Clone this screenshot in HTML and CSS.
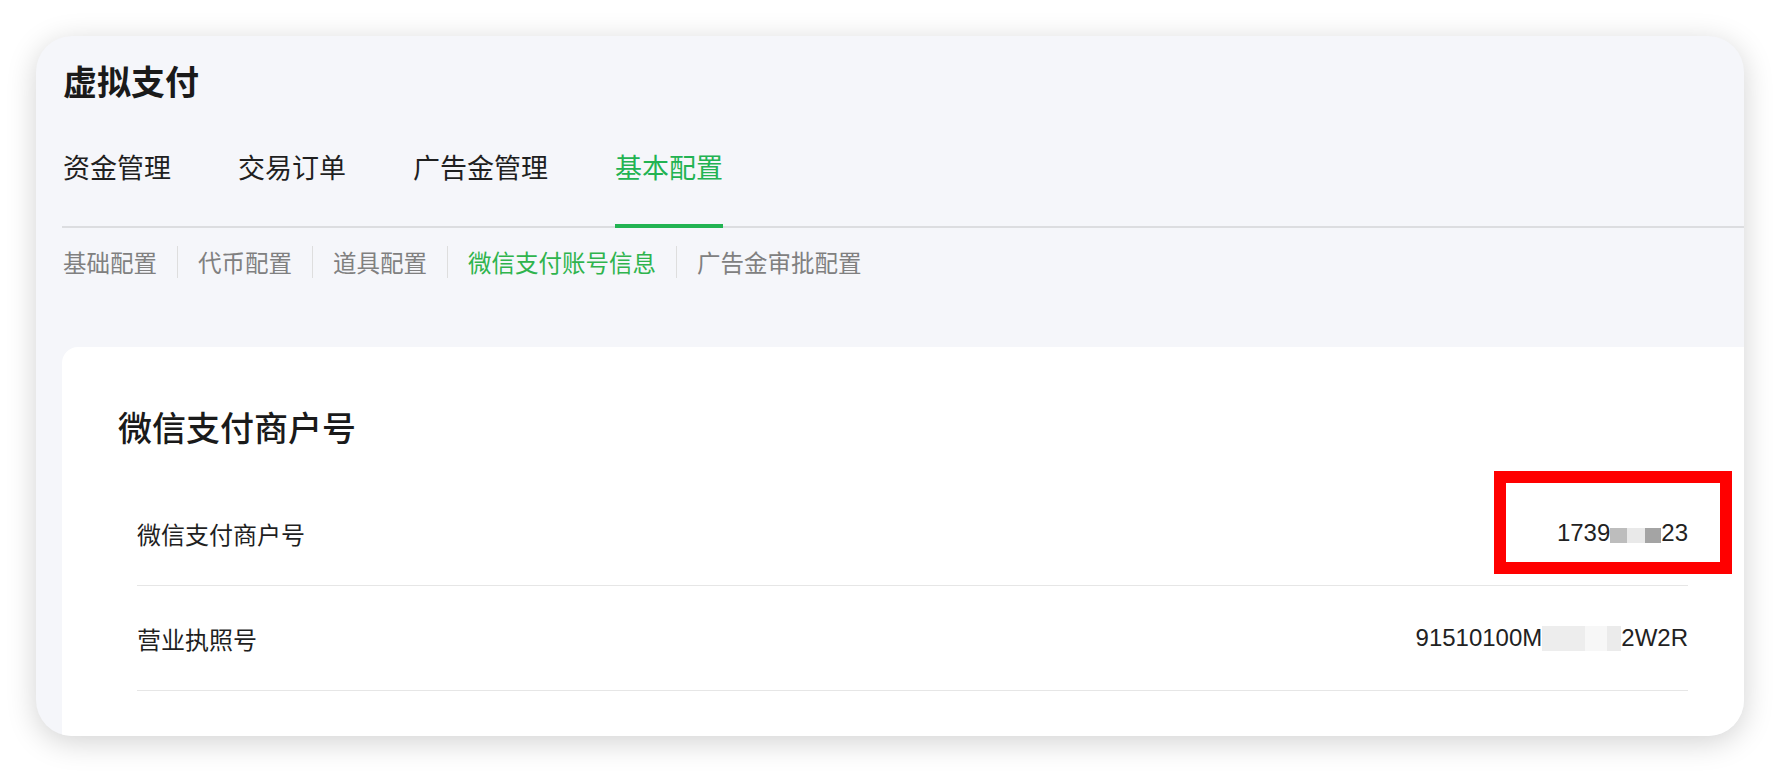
FILE: index.html
```html
<!DOCTYPE html>
<html lang="zh-CN">
<head>
    <meta charset="UTF-8">
    <meta name="viewport" content="width=device-width, initial-scale=1.0">
    <title>虚拟支付</title>
    <link rel="stylesheet" href="styles.css">
</head>
<body>
    <div class="panel">
        <h1 class="page-title">虚拟支付</h1>

        <nav class="main-tabs">
            <a class="main-tab">资金管理</a>
            <a class="main-tab">交易订单</a>
            <a class="main-tab">广告金管理</a>
            <a class="main-tab active">基本配置</a>
        </nav>

        <nav class="sub-tabs">
            <a class="sub-tab">基础配置</a>
            <a class="sub-tab">代币配置</a>
            <a class="sub-tab">道具配置</a>
            <a class="sub-tab active">微信支付账号信息</a>
            <a class="sub-tab">广告金审批配置</a>
        </nav>

        <section class="card">
            <h2 class="card-title">微信支付商户号</h2>

            <div class="info-row">
                <span class="info-label">微信支付商户号</span>
                <span class="info-value">1739<span class="mosaic"><i class="m1"></i><i class="m2"></i><i class="m3"></i></span>23</span>
            </div>
            <div class="info-row">
                <span class="info-label">营业执照号</span>
                <span class="info-value">91510100M<span class="mosaic wide"><i class="m4"></i><i class="m5"></i><i class="m6"></i></span>2W2R</span>
            </div>
        </section>

        <!-- highlight box from the screenshot annotation -->
        <div class="highlight"></div>
    </div>
</body>
</html>
```

FILE: styles.css
```css
body {
    margin: 0;
    padding: 36px;
    background-color: #ffffff;
    font-family: "Noto Sans CJK SC", "Noto Sans", sans-serif;
    color: #1a1a1a;
}

.panel {
    position: relative;
    height: 700px;
    box-sizing: border-box;
    padding: 21px 0 0 26px;
    background-color: #f5f6fa;
    border-radius: 36px;
    box-shadow: 0 6px 30px rgba(0,0,0,0.18);
    overflow: hidden;
}

.page-title {
    margin: 0 0 0 1px;
    font-size: 34px;
    line-height: 48px;
    font-weight: 700;
    color: #1a1a1a;
}

.main-tabs {
    display: flex;
    gap: 67px;
    margin-top: 42px;
    padding-left: 1px;
    border-bottom: 2px solid #dcdde0;
}

.main-tab {
    position: relative;
    padding-bottom: 39px;
    font-size: 27px;
    line-height: 40px;
    color: #1f1f1f;
}

.main-tab.active {
    color: #22b352;
}

.main-tab.active::after {
    content: "";
    position: absolute;
    left: 0;
    right: 0;
    bottom: -2px;
    height: 4px;
    background-color: #22b352;
}

.sub-tabs {
    display: flex;
    align-items: center;
    margin-top: 18px;
    padding-left: 1px;
}

.sub-tab {
    padding: 0 20px;
    font-size: 23.5px;
    line-height: 32px;
    color: #808080;
    border-left: 1px solid #dedede;
}

.sub-tab:first-child {
    padding-left: 0;
    border-left: none;
}

.sub-tab.active {
    color: #2fb44d;
}

.card {
    margin-top: 69px;
    height: 400px;
    padding: 56px 56px 0 56px;
    background-color: #ffffff;
    border-radius: 16px 0 0 12px;
}

.card-title {
    margin: 0 0 30px 0;
    font-size: 34px;
    line-height: 48px;
    font-weight: 500;
    color: #1a1a1a;
}

.info-row {
    display: flex;
    align-items: center;
    justify-content: space-between;
    height: 104px;
    margin-left: 19px;
    border-bottom: 1px solid #e6e6e6;
}

.info-label {
    font-size: 24px;
    color: #1f1f1f;
}

.info-value {
    font-family: "Liberation Sans", "Noto Sans", sans-serif;
    font-size: 24px;
    color: #222222;
    white-space: nowrap;
}

.mosaic {
    display: inline-flex;
    vertical-align: -2px;
    height: 15px;
}

.mosaic i {
    display: block;
    width: 18px;
    height: 100%;
}

.mosaic .m1 { background-color: #bdbdbd; width: 17px; }
.mosaic .m2 { background-color: #e9e9e9; }
.mosaic .m3 { background-color: #a4a4a4; width: 16px; }

.mosaic.wide {
    height: 25px;
    vertical-align: -5px;
}

.mosaic .m4 { background-color: #ededed; width: 43px; }
.mosaic .m5 { background-color: #f7f7f7; width: 22px; }
.mosaic .m6 { background-color: #ebebeb; width: 14px; }

.highlight {
    position: absolute;
    left: 1458px;
    top: 435px;
    width: 238px;
    height: 103px;
    box-sizing: border-box;
    border: 12px solid #ff0000;
}
```
